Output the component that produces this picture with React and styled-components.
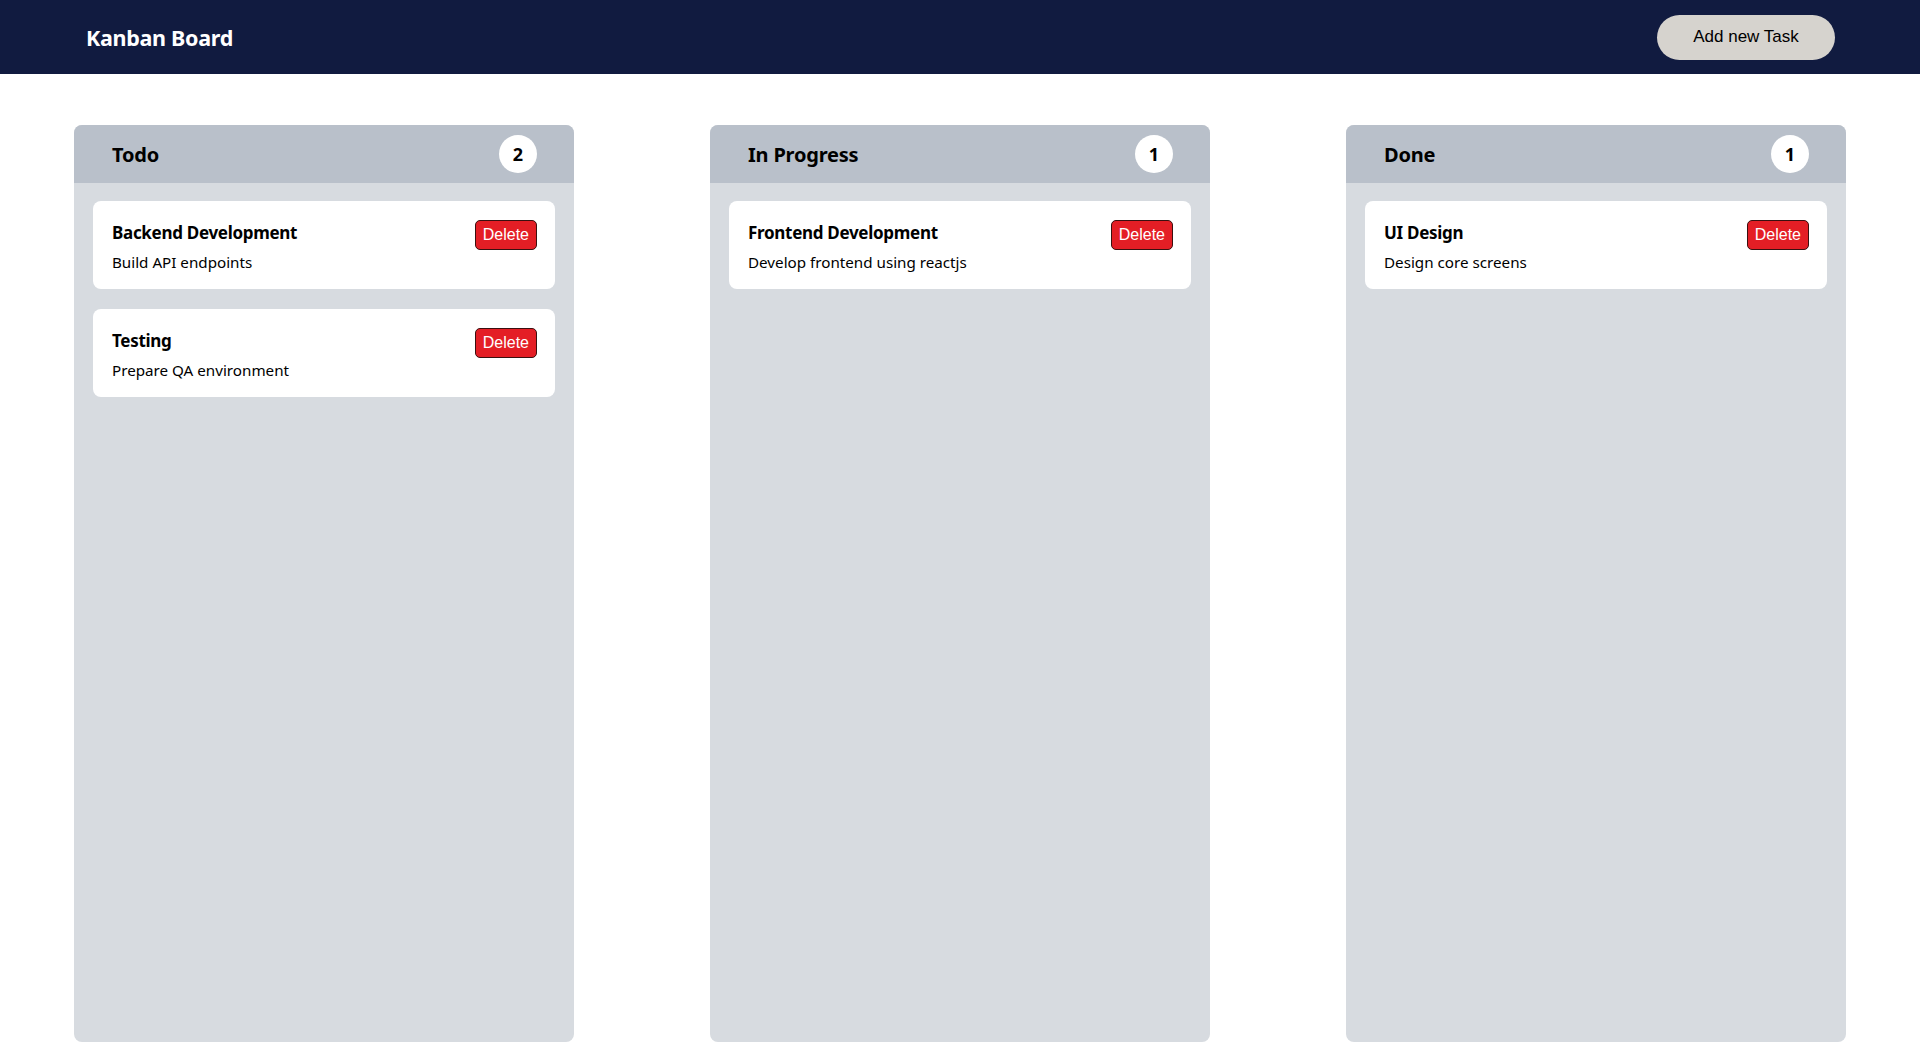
import React, { useState } from 'react'
import styled, { createGlobalStyle } from 'styled-components'

const GlobalStyle = createGlobalStyle`
  * {
    box-sizing: border-box;
  }
  body {
    margin: 0;
    background: #ffffff;
    font-family: 'Noto Sans', 'Open Sans', sans-serif;
    color: #000;
  }
`

const TopBar = styled.header`
  height: 74px;
  background-color: #111b40;
  display: flex;
  align-items: center;
  justify-content: space-between;
  padding: 0 85px 0 86px;
`
const Title = styled.h1`
  margin: 0;
  color: #ffffff;
  font-size: 21.5px;
  font-weight: 700;
  letter-spacing: -0.3px;
`
const AddButton = styled.button`
  width: 178px;
  height: 45px;
  border: none;
  border-radius: 23px;
  background-color: #d6d3ce;
  color: #000;
  font-family: 'Liberation Sans', Arial, sans-serif;
  font-size: 17px;
  cursor: pointer;
`
const Board = styled.main`
  display: flex;
  justify-content: space-between;
  padding: 51px 74px 0 74px;
`
const Column = styled.section`
  width: 500px;
  height: 917px;
  background-color: #d7dbe0;
  border-radius: 8px;
  overflow: hidden;
  display: flex;
  flex-direction: column;
`
const ColumnHead = styled.div`
  height: 58px;
  background-color: #b9c0ca;
  display: flex;
  align-items: center;
  justify-content: space-between;
  padding: 0 37px 0 38px;
`
const ColumnName = styled.h2`
  margin: 0;
  font-size: 20px;
  font-weight: 700;
  letter-spacing: -0.2px;
`
const Count = styled.span`
  width: 38px;
  height: 38px;
  border-radius: 50%;
  background-color: #ffffff;
  display: flex;
  align-items: center;
  justify-content: center;
  font-size: 18px;
  font-weight: 700;
`
const CardList = styled.div`
  display: flex;
  flex-direction: column;
  gap: 20px;
  padding: 18px 19px;
`
const Card = styled.div`
  background-color: #ffffff;
  border-radius: 8px;
  height: 88px;
  padding: 20px 18px 0 19px;
  display: flex;
  justify-content: space-between;
  align-items: flex-start;
`
const CardText = styled.div`
  display: flex;
  flex-direction: column;
  gap: 7px;
`
const CardTitle = styled.div`
  font-size: 17px;
  font-weight: 700;
  line-height: 24px;
  letter-spacing: -0.3px;
`
const CardDesc = styled.div`
  font-size: 15.2px;
  line-height: 20px;
`
const DeleteButton = styled.button`
  height: 30px;
  margin-top: -1px;
  padding: 0 7px;
  background-color: #e41e25;
  color: #ffffff;
  border: 1px solid #3a1010;
  border-radius: 5px;
  font-family: 'Liberation Sans', Arial, sans-serif;
  font-size: 16px;
  cursor: pointer;
`

const initial = [
  { id: 1, name: 'Todo', tasks: [
    { id: 11, title: 'Backend Development', desc: 'Build API endpoints' },
    { id: 12, title: 'Testing', desc: 'Prepare QA environment' }
  ] },
  { id: 2, name: 'In Progress', tasks: [
    { id: 21, title: 'Frontend Development', desc: 'Develop frontend using reactjs' }
  ] },
  { id: 3, name: 'Done', tasks: [
    { id: 31, title: 'UI Design', desc: 'Design core screens' }
  ] }
]

const App = () => {
  const [columns, setColumns] = useState(initial)

  // remove a task from its column
  const handleDelete = (colId, taskId) => {
    setColumns(cols => cols.map(c => c.id === colId
      ? { ...c, tasks: c.tasks.filter(t => t.id !== taskId) }
      : c))
  }

  return (
    <>
      <GlobalStyle />
      <TopBar>
        <Title>Kanban Board</Title>
        <AddButton>Add new Task</AddButton>
      </TopBar>
      <Board>
        {columns.map(col => (
          <Column key={col.id}>
            <ColumnHead>
              <ColumnName>{col.name}</ColumnName>
              <Count>{col.tasks.length}</Count>
            </ColumnHead>
            <CardList>
              {col.tasks.map(task => (
                <Card key={task.id}>
                  <CardText>
                    <CardTitle>{task.title}</CardTitle>
                    <CardDesc>{task.desc}</CardDesc>
                  </CardText>
                  <DeleteButton onClick={() => handleDelete(col.id, task.id)}>Delete</DeleteButton>
                </Card>
              ))}
            </CardList>
          </Column>
        ))}
      </Board>
    </>
  )
}

export default App
